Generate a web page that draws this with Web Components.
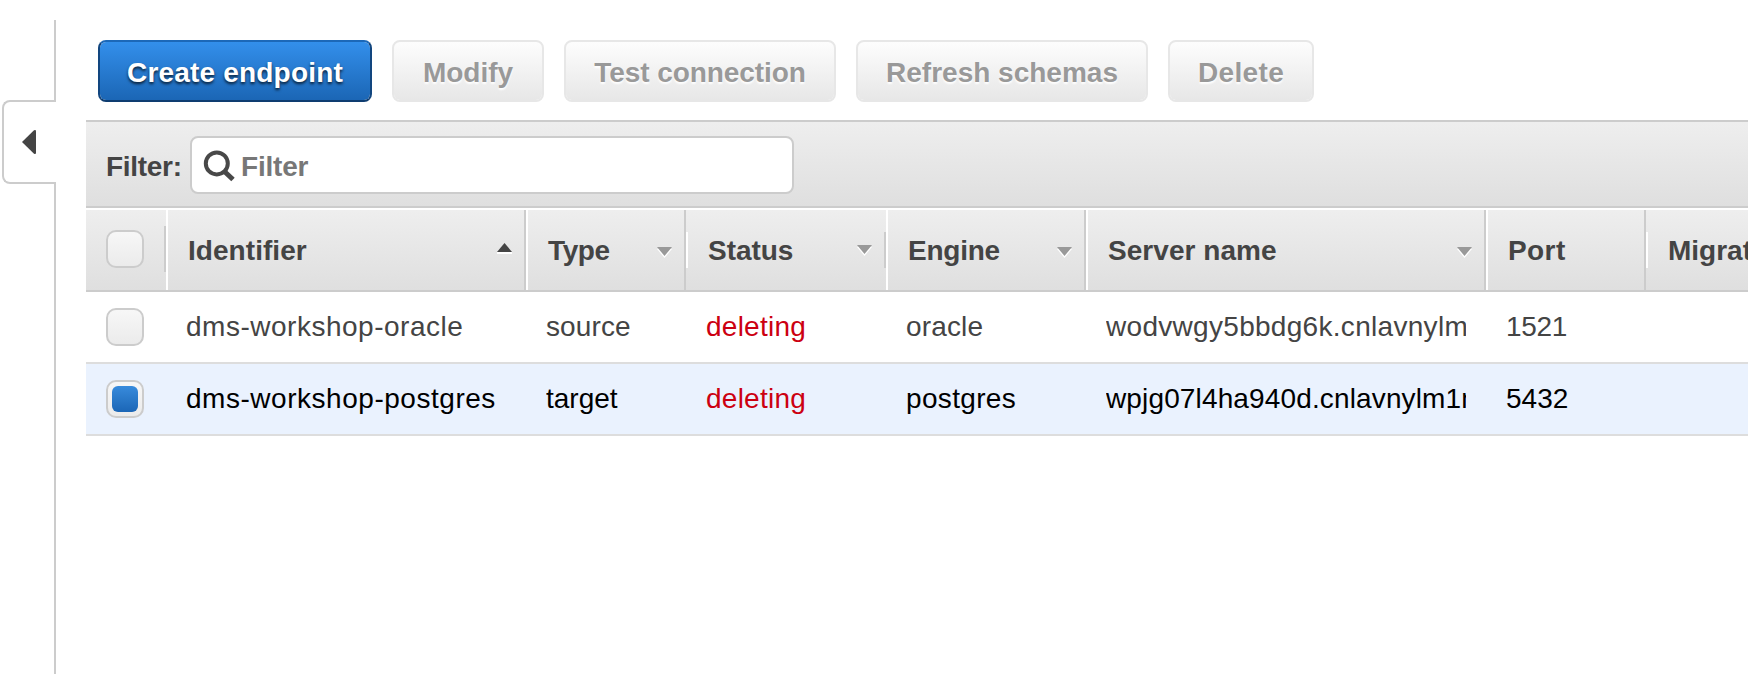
<!DOCTYPE html>
<html lang="en"><head><meta charset="utf-8"><title>Endpoints</title>
<style>
html,body{margin:0;height:100%;background:#fff;overflow:hidden}
body{font:28px/32px "Liberation Sans",Arial,sans-serif;color:#444}
</style></head><body>
<dms-console></dms-console>
<script>
const define=(name,html)=>{
  const t=document.createElement('template');t.innerHTML=html;
  customElements.define(name,class extends HTMLElement{
    constructor(){super();this.attachShadow({mode:'open'}).append(t.content.cloneNode(true));}
    connectedCallback(){
      if(this.hasAttribute('w'))this.style.setProperty('--w',this.getAttribute('w')+'px');
      if(this.hasAttribute('ls'))this.style.setProperty('--ls',this.getAttribute('ls')+'px');
    }
  });
};

define('dms-button',`<style>
:host{display:block;width:var(--w);height:62px;flex:none}
button{all:unset;box-sizing:border-box;width:100%;height:100%;display:flex;justify-content:center;align-items:center;padding-top:3px;border:2px solid #e7e7e7;border-radius:8px;background:linear-gradient(#fdfdfd,#e7e7e7) padding-box;color:#999;font-weight:bold;white-space:nowrap;letter-spacing:var(--ls,0);text-shadow:0 2px 2px #fff}
:host([primary]) button{color:#fff;border-color:#1c68b8 #12467f #0e3c70;background:linear-gradient(#338feb,#1b66b5) padding-box;text-shadow:0 2px 3px rgba(0,0,0,.75)}
</style><button><slot></slot></button>`);

define('dms-rail',`<style>
:host{display:flex;flex-direction:column;width:56px;height:100%;box-sizing:border-box;padding-top:20px;flex:none}
.line{width:2px;margin-left:54px;background:#ccc;height:80px;flex:none}
.line.rest{flex:1;height:auto}
.tab{box-sizing:border-box;margin-left:2px;width:54px;height:84px;flex:none;border:2px solid #ccc;border-right:0;border-radius:8px 0 0 8px;display:flex;align-items:center;padding-left:18px}
svg{display:block}
</style><div class="line"></div><div class="tab"><svg width="15" height="26" viewBox="0 0 15 26"><path d="M0 13 12 1.3Q14 .3 14 2.3V23.7Q14 25.7 12 24.7Z" fill="#444"/></svg></div><div class="line rest"></div>`);

define('dms-filter',`<style>
:host{display:flex;align-items:center;box-sizing:border-box;height:88px;border:solid #ccc;border-width:2px 0;background:linear-gradient(#eee,#dfdfdf);padding-left:20px;font-weight:bold}
label{width:84px;padding-top:5px;letter-spacing:-.3px}
.field{box-sizing:border-box;width:604px;height:58px;margin-top:2px;border:2px solid #ccc;border-radius:8px;background:#fff;display:flex;align-items:center;padding-left:10px;color:#777}
.field span{padding:3px 0 0 5px;letter-spacing:-.2px}
</style><label>Filter:</label><div class="field"><svg width="34" height="34" viewBox="0 0 34 34"><g fill="none" stroke="#484848"><circle cx="14.8" cy="15.4" r="11" stroke-width="4"/><path d="m23 24 8 7.5" stroke-width="5"/></g></svg><span>Filter</span></div>`);

define('dms-check',`<style>
:host{display:block;flex:none;box-sizing:border-box;width:38px;height:38px;padding:4px;border:2px solid #ccc;border-radius:10px;background:linear-gradient(#f7f7f7,#ebebeb)}
i{display:none;height:26px;border-radius:6px;background:linear-gradient(#388bdc,#1b66b6)}
:host([checked]) i{display:block}
</style><i></i>`);

define('dms-th',`<style>
:host{display:flex;box-sizing:border-box;width:var(--w);height:80px;flex:none;align-items:center;justify-content:space-between;border-left:2px solid #fff;border-right:2px solid #ccc;padding:2px 12px 0 20px;font-weight:bold;white-space:nowrap;letter-spacing:var(--ls,0)}
:host([shortright]){border-right:2px solid;border-image:linear-gradient(transparent var(--a,22px),#ccc var(--a,22px) var(--b,58px),transparent var(--b,58px)) 0 2 0 2;border-left:0;padding-left:22px}
:host([first]){padding:0 12px 2px 20px}
:host([shortleft]){border-left:0;padding-left:22px;background:linear-gradient(#fff,#fff) 0 22px/2px 36px no-repeat}
:host([last]){border-right:0;overflow:hidden}
svg{display:none;overflow:visible}
:host([sort]) svg{display:block}
:host([sort=down]) .up,:host([sort=up]) .down{display:none}
:host([sort=up]) svg{margin-top:-6px}
:host([sort=down]) svg{margin-top:2px}
:host([raise]) svg{margin-top:-2px!important}
</style><slot></slot><svg width="15" height="10" viewBox="0 0 15 10"><g class="up"><path d="M0 10H15" stroke="#fff" stroke-width="2"/><path d="M0 9 7.5 0 15 9Z" fill="#444"/></g><g class="down"><path d="M0 2 7.5 11 15 2" fill="#fff"/><path d="M0 0H15L7.5 9Z" fill="#999"/></g></svg>`);

define('dms-td',`<style>
:host{display:block;box-sizing:border-box;width:var(--w);flex:none;padding:0 20px}
div{overflow:hidden;white-space:nowrap;letter-spacing:var(--ls,0)}
:host([bad]){color:#cc0011}
</style><div><slot></slot></div>`);

define('dms-row',`<style>
:host{display:flex;align-items:center;box-sizing:border-box;height:72px;border-bottom:2px solid #ddd}
:host([selected]){background:#eaf2fe;color:#000}
</style><slot name="check"></slot><slot></slot>`);

define('dms-head',`<style>
:host{display:flex;height:80px;margin-top:2px;border-bottom:2px solid #ccc;background:linear-gradient(#eee,#dfdfdf);overflow:hidden}
</style><slot></slot>`);

define('dms-console',`<style>
:host{display:flex;height:100vh;overflow:hidden}
main{flex:1;min-width:0;padding-left:30px;overflow:hidden}
nav{display:flex;gap:20px;padding:40px 0 18px 12px}
dms-row dms-check{margin:0 22px 0 20px}
</style>
<dms-rail></dms-rail>
<main>
<nav><dms-button primary w="274" ls=".19">Create endpoint</dms-button><dms-button w="152">Modify</dms-button><dms-button w="272" ls="-.07">Test connection</dms-button><dms-button w="292">Refresh schemas</dms-button><dms-button w="146" ls=".35">Delete</dms-button></nav>
<dms-filter></dms-filter>
<dms-head>
<dms-th w="80" shortright first style="--a:16px;--b:62px"><dms-check></dms-check></dms-th>
<dms-th w="360" sort="up" ls=".05">Identifier</dms-th><dms-th w="160" sort="down" ls="-.4">Type</dms-th><dms-th w="200" sort="down" raise shortleft shortright ls="-.05">Status</dms-th><dms-th w="200" sort="down" ls="-.25">Engine</dms-th><dms-th w="400" sort="down" ls=".05">Server name</dms-th><dms-th w="160" ls=".4">Port</dms-th><dms-th w="102" shortleft last>Migration</dms-th>
</dms-head>
<dms-row><dms-check slot="check"></dms-check><dms-td w="360" ls=".51">dms-workshop-oracle</dms-td><dms-td w="160" ls=".11">source</dms-td><dms-td w="200" bad ls=".25">deleting</dms-td><dms-td w="200" ls=".16">oracle</dms-td><dms-td w="400" ls=".3">wodvwgy5bbdg6k.cnlavnylm1n</dms-td><dms-td w="160" ls="-.3">1521</dms-td></dms-row>
<dms-row selected><dms-check slot="check" checked></dms-check><dms-td w="360" ls=".53">dms-workshop-postgres</dms-td><dms-td w="160">target</dms-td><dms-td w="200" bad ls=".25">deleting</dms-td><dms-td w="200" ls=".34">postgres</dms-td><dms-td w="400" ls=".14">wpjg07l4ha940d.cnlavnylm1n</dms-td><dms-td w="160">5432</dms-td></dms-row>
</main>`);
</script></body></html>
